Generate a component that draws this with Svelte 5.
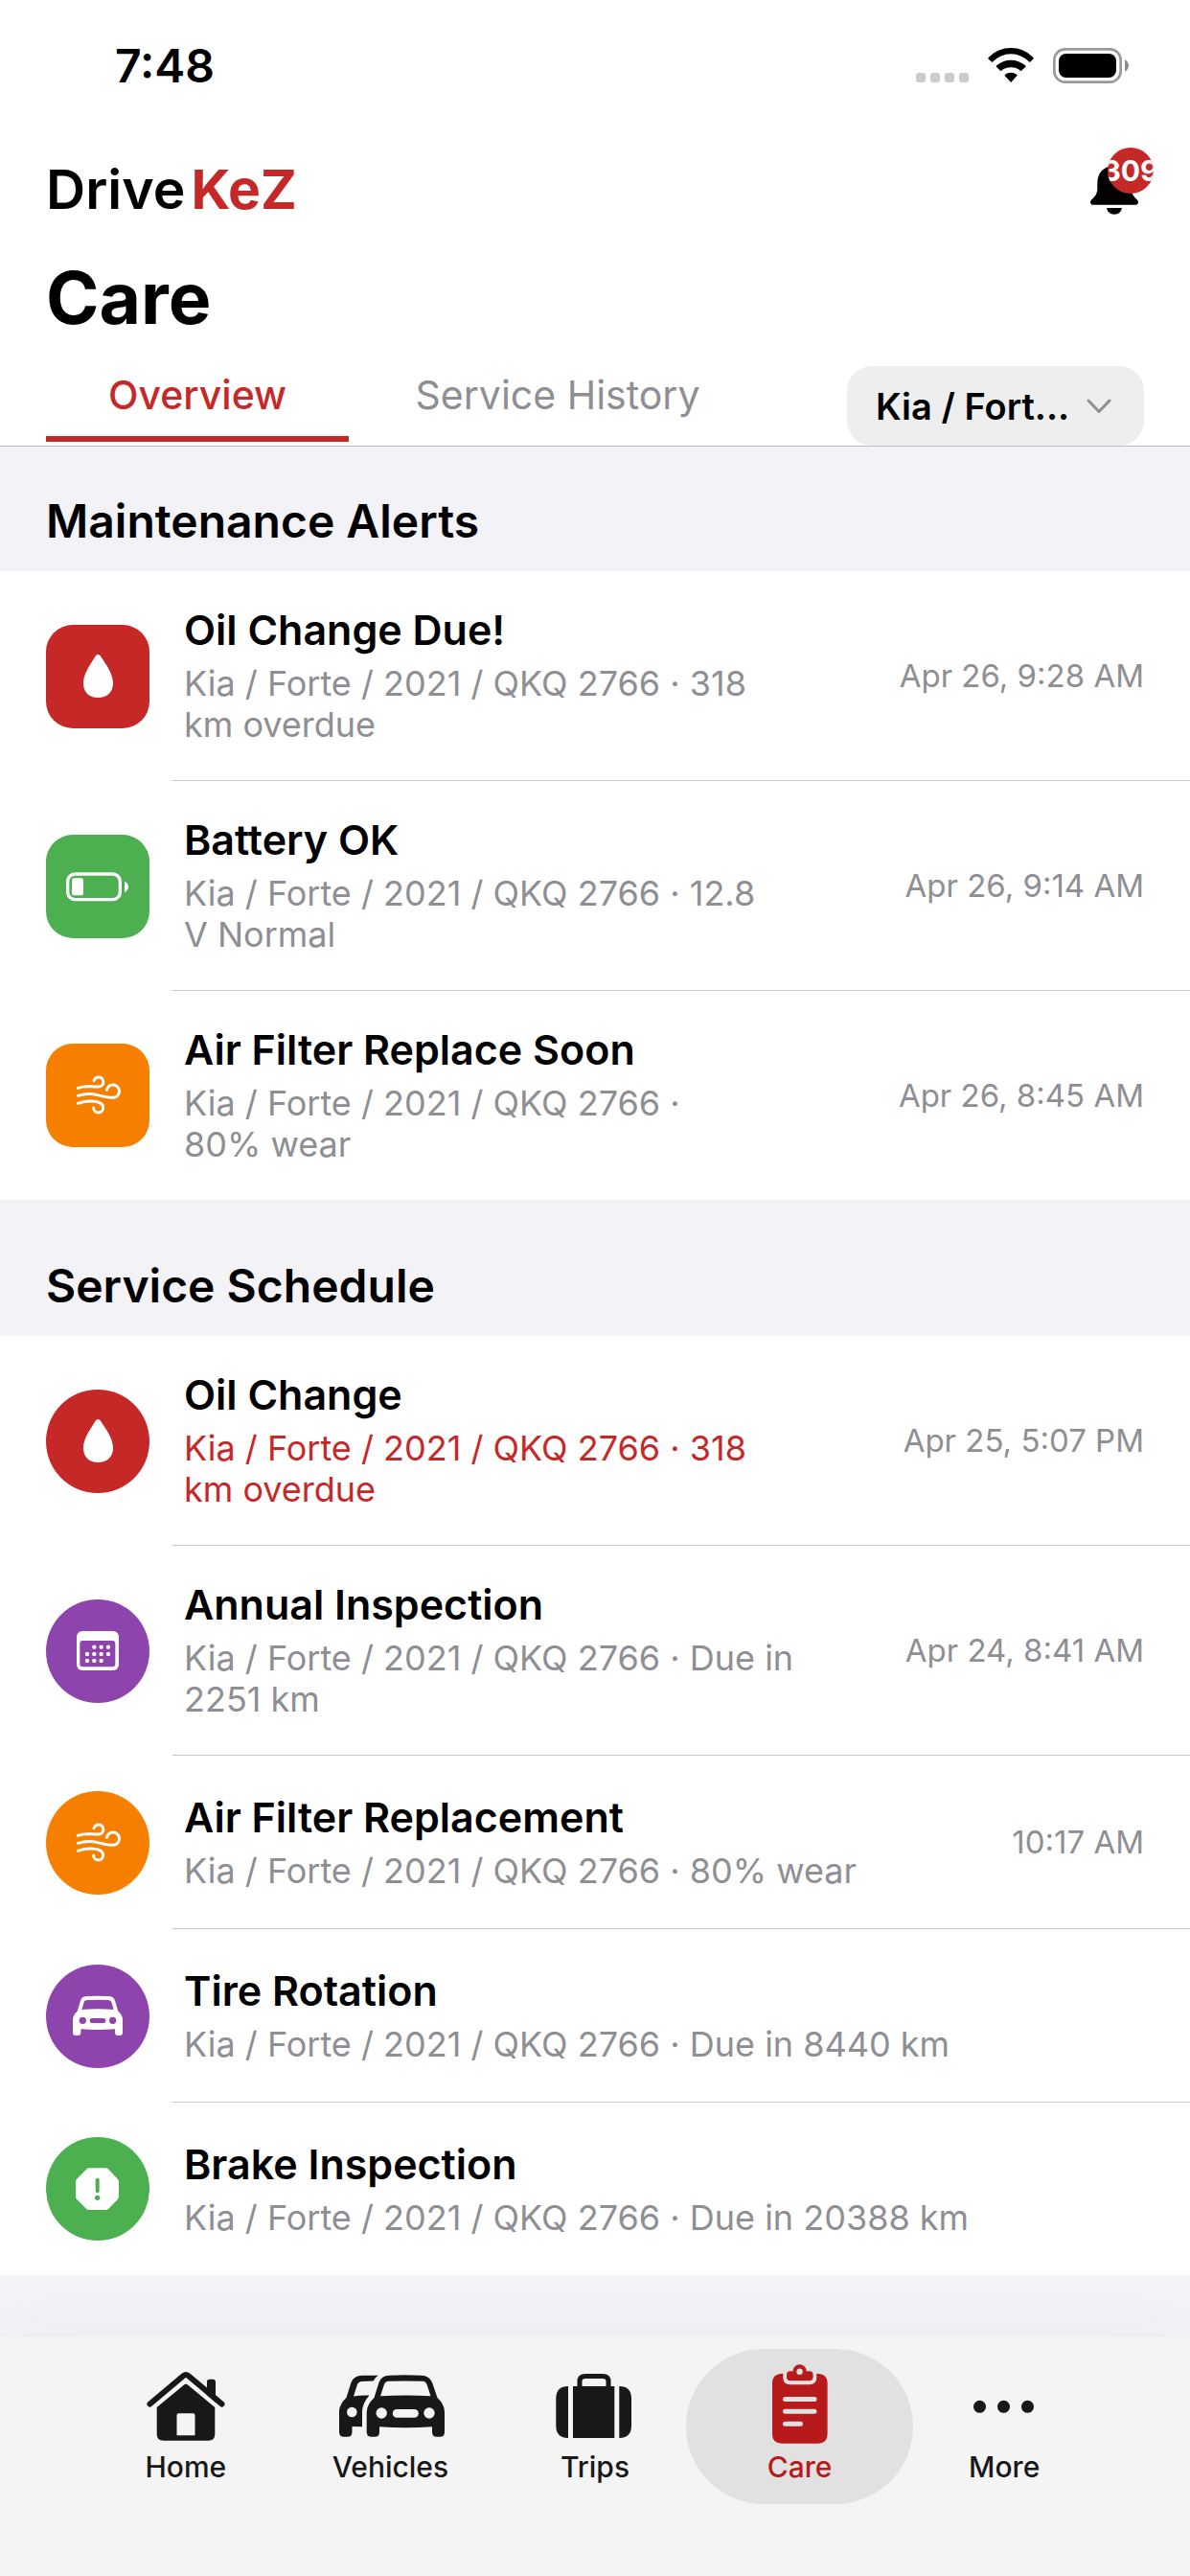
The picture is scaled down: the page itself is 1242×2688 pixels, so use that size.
<script>
	// Data
	const plate = 'Kia / Forte / 2021 / QKQ 2766 ·'

	const alerts = [
		{ title: 'Oil Change Due!', detail: `${plate} 318\nkm overdue`, time: 'Apr 26, 9:28 AM', icon: 'drop', color: 'red' },
		{ title: 'Battery OK', detail: `${plate} 12.8\nV Normal`, time: 'Apr 26, 9:14 AM', icon: 'battery', color: 'green' },
		{ title: 'Air Filter Replace Soon', detail: `${plate}\n80% wear`, time: 'Apr 26, 8:45 AM', icon: 'wind', color: 'orange' }
	]

	const schedule = [
		{ title: 'Oil Change', detail: `${plate} 318\nkm overdue`, time: 'Apr 25, 5:07 PM', icon: 'drop', color: 'red', overdue: true },
		{ title: 'Annual Inspection', detail: `${plate} Due in\n2251 km`, time: 'Apr 24, 8:41 AM', icon: 'calendar', color: 'purple' },
		{ title: 'Air Filter Replacement', detail: `${plate} 80% wear`, time: '10:17 AM', icon: 'wind', color: 'orange' },
		{ title: 'Tire Rotation', detail: `${plate} Due in 8440 km`, icon: 'car', color: 'purple' },
		{ title: 'Brake Inspection', detail: `${plate} Due in 20388 km`, icon: 'stop', color: 'green' }
	]

	const tabs = ['Overview', 'Service History']
	const pages = ['Home', 'Vehicles', 'Trips', 'Care', 'More']
	const calendarDots = [
		[151, 149], [173, 149], [195, 149],
		[129, 171], [151, 171], [173, 171], [195, 171],
		[129, 192], [151, 192], [173, 192]
	]

	let tab = $state('Overview')
	let page = $state('Care')
	let vehicle = $state('forte')
</script>

{#snippet rowIcon(name)}
	<svg viewBox="0 0 324 324" aria-hidden="true">
		{#if name === 'drop'}
			<path fill="#fff" d="M163 93C168 93 170 97 173 101C192 129 210 155 210 183C210 211 191 228 163 228C135 228 117 211 117 183C117 155 135 129 153 101C156 97 158 93 163 93Z" />
		{:else if name === 'battery'}
			<rect x="68" y="123" width="164" height="80" rx="23" fill="none" stroke="#fff" stroke-width="10" />
			<rect x="81" y="136" width="36" height="54" rx="8" fill="#fff" />
			<path fill="#fff" d="M246 146C254 149 258 156 258 163C258 170 254 177 246 180Z" />
		{:else if name === 'wind'}
			<g fill="none" stroke="#fff" stroke-width="9" stroke-linecap="round">
				<path d="M100 139C122 130 141 136 165 135A15 15 0 1 0 150 116" />
				<path d="M100 163C131 153 151 158 171 163S196 169 210 169A20 20 0 1 0 190 145" />
				<path d="M100 187C126 178 179 174 179 201A15 15 0 0 1 149 201" />
			</g>
		{:else if name === 'calendar'}
			<rect x="96" y="99" width="132" height="123" rx="18" fill="#fff" />
			<rect x="106" y="129" width="111" height="82" rx="9" fill="currentColor" />
			{#each calendarDots as [x, y]}
				<rect x={x - 6} y={y - 6} width="12" height="12" rx="4" fill="#fff" />
			{/each}
		{:else if name === 'car'}
			<path fill="#fff" fill-rule="evenodd" d="M98 146L108 113Q112 100 126 99Q162 97 198 99Q212 100 216 113L226 146Q240 158 240 172V213Q240 222 231 222H225Q216 222 216 213V202Q162 206 109 202V213Q109 222 99 222H93Q84 222 84 213V172Q84 158 98 146ZM112 141Q162 137 212 141L205 117Q202 111 194 111Q162 109 130 111Q122 111 119 117Z" />
			<g fill="currentColor">
				<circle cx="115" cy="175" r="11" />
				<circle cx="209" cy="175" r="11" />
				<rect x="137" y="168" width="50" height="15" rx="7" />
			</g>
		{:else if name === 'stop'}
			<path fill="#fff" d="M136 97H186Q192 97 196 101L225 132Q228 136 228 141V185Q228 190 225 194L196 224Q192 228 186 228H136Q130 228 126 224L96 194Q93 190 93 185V140Q93 135 96 132L126 101Q130 97 136 97Z" />
			<path stroke="currentColor" stroke-width="12" stroke-linecap="round" d="M161 134V169" />
			<circle cx="161" cy="190" r="8" fill="currentColor" />
		{/if}
	</svg>
{/snippet}

{#snippet pageIcon(name)}
	<svg viewBox="0 0 120 90" aria-hidden="true">
		{#if name === 'Home'}
			<path fill="none" stroke="currentColor" stroke-width="6" stroke-linecap="round" stroke-linejoin="round" d="M22.5 43.5L57.5 14Q60 12 62.5 14L97.5 43.5" />
			<path fill="currentColor" d="M82 34V20.5Q82 17.7 85 17.7H88Q91 17.7 91 20.5V42Z" />
			<path fill="currentColor" fill-rule="evenodd" d="M57.5 24Q60 21.5 62.5 24L90.3 47V75Q90.3 81.7 83.5 81.7H36.5Q29.7 81.7 29.7 75V47ZM50.5 76.3H69.5V55Q69.5 53.3 67.5 53.3H52.5Q50.5 53.3 50.5 55Z" />
		{:else if name === 'Vehicles'}
			<path fill="currentColor" d="M47.8 13.7Q44 16 42.7 19.5L30 20Q27 20.3 26 23L22 35.5Q30 34 38.5 34.5Q31 43 31 52V67.3L20.5 67V73Q20.5 77.7 16 77.7H11.5Q7 77.7 7 73V50Q8 43 14.5 36.7L19.5 21Q22 14 31 13.7Z" />
			<path fill="currentColor" fill-rule="evenodd" d="M43.5 37L48.5 21Q51 14 59 13.7Q76 12.7 93 13.7Q101 14 104 21L109.5 37Q117 44 117 52V73Q117 77.7 112.5 77.7H108.5Q104 77.7 104 73V67.3Q76 69 49 67.3V73Q49 77.7 44.5 77.7H40.5Q35.7 77.7 35.7 73V52Q36 44 43.5 37ZM50 35.3Q76 33.5 102.5 35.3L98.5 23Q97.5 20 94 19.8Q76 19 58.5 19.8Q55 20 54 23Z" />
			<g class="cut">
				<circle cx="20.3" cy="52" r="5.3" />
				<circle cx="51.2" cy="53" r="5.7" />
				<circle cx="101" cy="53" r="5.7" />
				<rect x="62.8" y="49" width="27" height="8.7" rx="4.3" />
			</g>
		{:else if name === 'Trips'}
			<path fill="none" stroke="currentColor" stroke-width="5" d="M44 27V20Q44 14.5 50 14.5H68Q74 14.5 74 20V27" />
			<path fill="currentColor" d="M37 25H80.3V79H37ZM32 25V79Q19.3 79 19.3 66V38Q19.3 25 32 25ZM85.3 25Q98 25 98 38V66Q98 79 85.3 79Z" />
		{:else if name === 'Care'}
			<path fill="currentColor" d="M42.3 11.7V16Q42.3 23.3 49.5 23.3H70Q77.3 23.3 77.3 16V11.7Q88.6 11.7 88.6 22V75Q88.6 84.7 79 84.7H41Q31 84.7 31 75V22Q31 11.7 42.3 11.7Z" />
			<path fill="currentColor" fill-rule="evenodd" d="M50 9.3H52.6A7 7 0 0 1 66.6 9.3H70Q73.6 9.3 73.6 13V15Q73.6 19.3 69.5 19.3H50Q46 19.3 46 15V13Q46 9.3 50 9.3ZM62.8 9.7A3.2 3.2 0 1 0 56.4 9.7A3.2 3.2 0 1 0 62.8 9.7Z" />
			<path class="lines" d="M44.5 38.5H75M44.5 51.3H75M44.5 64.3H60.5" />
		{:else}
			<g fill="currentColor">
				<circle cx="34.5" cy="46.3" r="6.5" />
				<circle cx="59.5" cy="46.3" r="6.5" />
				<circle cx="84.5" cy="46.3" r="6.5" />
			</g>
		{/if}
	</svg>
{/snippet}

{#snippet list(items, shape)}
	<ul>
		{#each items as item}
			<li>
				<span class="tile {shape} {item.color}">{@render rowIcon(item.icon)}</span>
				<div class="row">
					<div class="text">
						<h3>{item.title}</h3>
						<p class:overdue={item.overdue}>{item.detail}</p>
					</div>
					{#if item.time}
						<time>{item.time}</time>
					{/if}
				</div>
			</li>
		{/each}
	</ul>
{/snippet}

<div class="app">
	<header>
		<div class="status">
			<span class="clock">7:48</span>
			<div class="indicators">
				<svg width="55" height="36" viewBox="0 0 55 36" fill="#cbcbcb" aria-hidden="true">
					<rect x="0" y="26" width="10" height="10" rx="3" />
					<rect x="15" y="26" width="10" height="10" rx="3" />
					<rect x="30" y="26" width="10" height="10" rx="3" />
					<rect x="45" y="26" width="10" height="10" rx="3" />
				</svg>
				<svg width="48" height="36" viewBox="0 0 143 108" aria-hidden="true">
					<path d="M2 29Q31 0 72 0Q112 0 141 29Q144 32 141 35L131 45Q104 19 72 19Q39 19 13 45L2 35Q-1 32 2 29ZM27 55Q46 38 72 38Q97 38 117 55Q119 58 117 60L103 73Q91 61 72 61Q53 61 40 73L27 60Q25 58 27 55ZM54 83Q61 77 72 77Q82 77 90 83Q93 86 90 88L72 108L53 88Q51 86 54 83Z" />
				</svg>
				<svg width="79" height="37" viewBox="0 0 237 111" aria-hidden="true">
					<rect x="4" y="4" width="208" height="103" rx="34" fill="none" stroke="#999" stroke-width="8" />
					<rect x="18" y="18" width="180" height="75" rx="23" />
					<path d="M225 36Q237 44 237 55.5Q237 67 225 75Z" fill="#8c8c8c" />
				</svg>
			</div>
		</div>

		<div class="brand">
			<span class="logo"><span>Drive</span><b>KeZ</b></span>
			<button class="bell" aria-label="Notifications">
				<svg width="50" height="52" viewBox="0 0 150 156" aria-hidden="true">
					<path d="M8 125Q0 124 0 116Q1 110 8 105Q21 92 22 78V58C22 26 40 4 75 4C110 4 128 26 128 58V78Q129 92 142 105Q149 110 150 116Q150 124 142 125ZM51 135H99Q95 155 75 155Q55 155 51 135Z" />
				</svg>
				<span class="badge">309</span>
			</button>
		</div>

		<h1>Care</h1>

		<div class="filters">
			{#each tabs as name}
				<button class="tab" class:active={tab === name} onclick={() => tab = name}>{name}</button>
			{/each}
			<label class="vehicle">
				<select bind:value={vehicle} aria-label="Vehicle">
					<option value="forte">Kia / Fort...</option>
				</select>
				<svg width="26" height="16" viewBox="0 0 26 16" aria-hidden="true">
					<path d="M2 2L13 13.5L24 2" fill="none" stroke="#8e8e93" stroke-width="3" stroke-linecap="round" stroke-linejoin="round" />
				</svg>
			</label>
		</div>
	</header>

	<main>
		<section>
			<h2>Maintenance Alerts</h2>
			{@render list(alerts, 'square')}
		</section>
		<section>
			<h2>Service Schedule</h2>
			{@render list(schedule, 'round')}
		</section>
	</main>

	<nav>
		{#each pages as name}
			<a href="#{name.toLowerCase()}" class:current={page === name} onclick={() => page = name}>
				{@render pageIcon(name)}
				<span>{name}</span>
			</a>
		{/each}
	</nav>
</div>

<style>
	:global(body) {
		margin: 0;
	}

	.app {
		min-height: 100vh;
		display: flex;
		flex-direction: column;
		background: #f2f2f7;
		color: #000;
		font-family: Inter, "Liberation Sans", sans-serif;
	}

	h1, h2, h3, p, ul {
		margin: 0;
		padding: 0;
	}

	svg {
		display: block;
	}

	button, select {
		font: inherit;
		border: 0;
		margin: 0;
		padding: 0;
		background: none;
		color: inherit;
	}

	header {
		background: #fff;
		border-bottom: 1px solid #bcbcc0;
	}

	.status {
		display: flex;
		justify-content: space-between;
		align-items: center;
		height: 136px;
		padding: 0 64px 0 120px;
	}

	.clock {
		font-size: 48px;
		font-weight: 600;
	}

	.indicators {
		display: flex;
		gap: 20px;
	}

	.brand {
		display: flex;
		justify-content: space-between;
		align-items: center;
		height: 72px;
		padding: 26px 48px 0;
	}

	.logo {
		display: flex;
		gap: 6px;
		font-size: 57px;
		font-weight: 600;
		line-height: 72px;
	}

	.logo b {
		color: #c62828;
		font-weight: 700;
	}

	.bell {
		position: relative;
		width: 56px;
	}

	.badge {
		position: absolute;
		top: -18px;
		right: -10px;
		display: flex;
		justify-content: center;
		align-items: center;
		width: 48px;
		height: 48px;
		border-radius: 50%;
		overflow: hidden;
		background: #c62828;
		color: #fff;
		font-size: 30px;
		font-weight: 700;
	}

	h1 {
		padding: 33px 48px 27px;
		font-size: 75px;
		font-weight: 700;
		line-height: 88px;
	}

	.filters {
		display: flex;
		align-items: flex-start;
		gap: 60px;
		padding: 0 48px;
	}

	.tab {
		flex: 0 1 316px;
		padding-bottom: 13px;
		border-bottom: 6px solid transparent;
		color: #8e8e93;
		font-size: 41px;
		line-height: 60px;
		white-space: nowrap;
	}

	.tab.active {
		border-color: #c62828;
		color: #c62828;
		font-weight: 500;
	}

	.vehicle {
		position: relative;
		flex: 0 0 310px;
		margin-left: auto;
	}

	.vehicle select {
		appearance: none;
		width: 100%;
		height: 83px;
		padding: 0 72px 0 30px;
		border-radius: 26px;
		background: #eee;
		font-size: 38px;
		font-weight: 600;
	}

	.vehicle svg {
		position: absolute;
		top: 34px;
		right: 34px;
		pointer-events: none;
	}

	main {
		flex: 1;
	}

	h2 {
		padding: 60px 48px 22px;
		font-size: 48px;
		font-weight: 600;
		line-height: 60px;
	}

	section:first-child h2 {
		padding-top: 48px;
	}

	ul {
		list-style: none;
		background: #fff;
	}

	li {
		display: flex;
		align-items: center;
		gap: 24px;
		padding-left: 48px;
	}

	.tile {
		flex: none;
		width: 108px;
		height: 108px;
	}

	.square {
		border-radius: 28px;
	}

	.round {
		border-radius: 50%;
	}

	/* the text colour equals the fill, so icons can cut holes with currentColor */
	.red {
		background: #c62828;
		color: #c62828;
	}

	.green {
		background: #4caf50;
		color: #4caf50;
	}

	.orange {
		background: #f77f00;
		color: #f77f00;
	}

	.purple {
		background: #8e44ad;
		color: #8e44ad;
	}

	.row {
		flex: 1;
		display: flex;
		justify-content: space-between;
		align-items: center;
		min-height: 108px;
		padding: 36px 48px 36px 12px;
		border-bottom: 1px solid #c6c6c8;
	}

	li:last-child .row {
		border-bottom: 0;
	}

	h3 {
		margin-bottom: 9px;
		font-size: 43px;
		font-weight: 600;
		line-height: 51px;
	}

	p {
		color: #8e8e93;
		font-size: 36px;
		line-height: 43px;
		white-space: pre-line;
	}

	p.overdue {
		color: #c62828;
	}

	time {
		color: #8e8e93;
		font-size: 33px;
		white-space: nowrap;
	}

	nav {
		display: grid;
		grid-template-columns: repeat(5, 1fr);
		padding: 12px 87px 75px;
		background: #f4f4f4;
		box-shadow: 0 0 70px rgba(0, 0, 0, .03);
	}

	nav a {
		display: flex;
		flex-direction: column;
		align-items: center;
		margin: 0 -12px;
		padding: 14px 0 20px;
		border-radius: 81px;
		color: #181818;
		font-size: 30px;
		font-weight: 500;
		line-height: 38px;
		text-decoration: none;
	}

	nav a.current {
		background: #e1e1e1;
		color: #b71a1a;
	}

	nav svg {
		width: 120px;
		height: 90px;
	}

	.cut {
		fill: #f4f4f4;
	}

	.lines {
		fill: none;
		stroke: #e1e1e1;
		stroke-width: 5px;
		stroke-linecap: round;
	}
</style>
